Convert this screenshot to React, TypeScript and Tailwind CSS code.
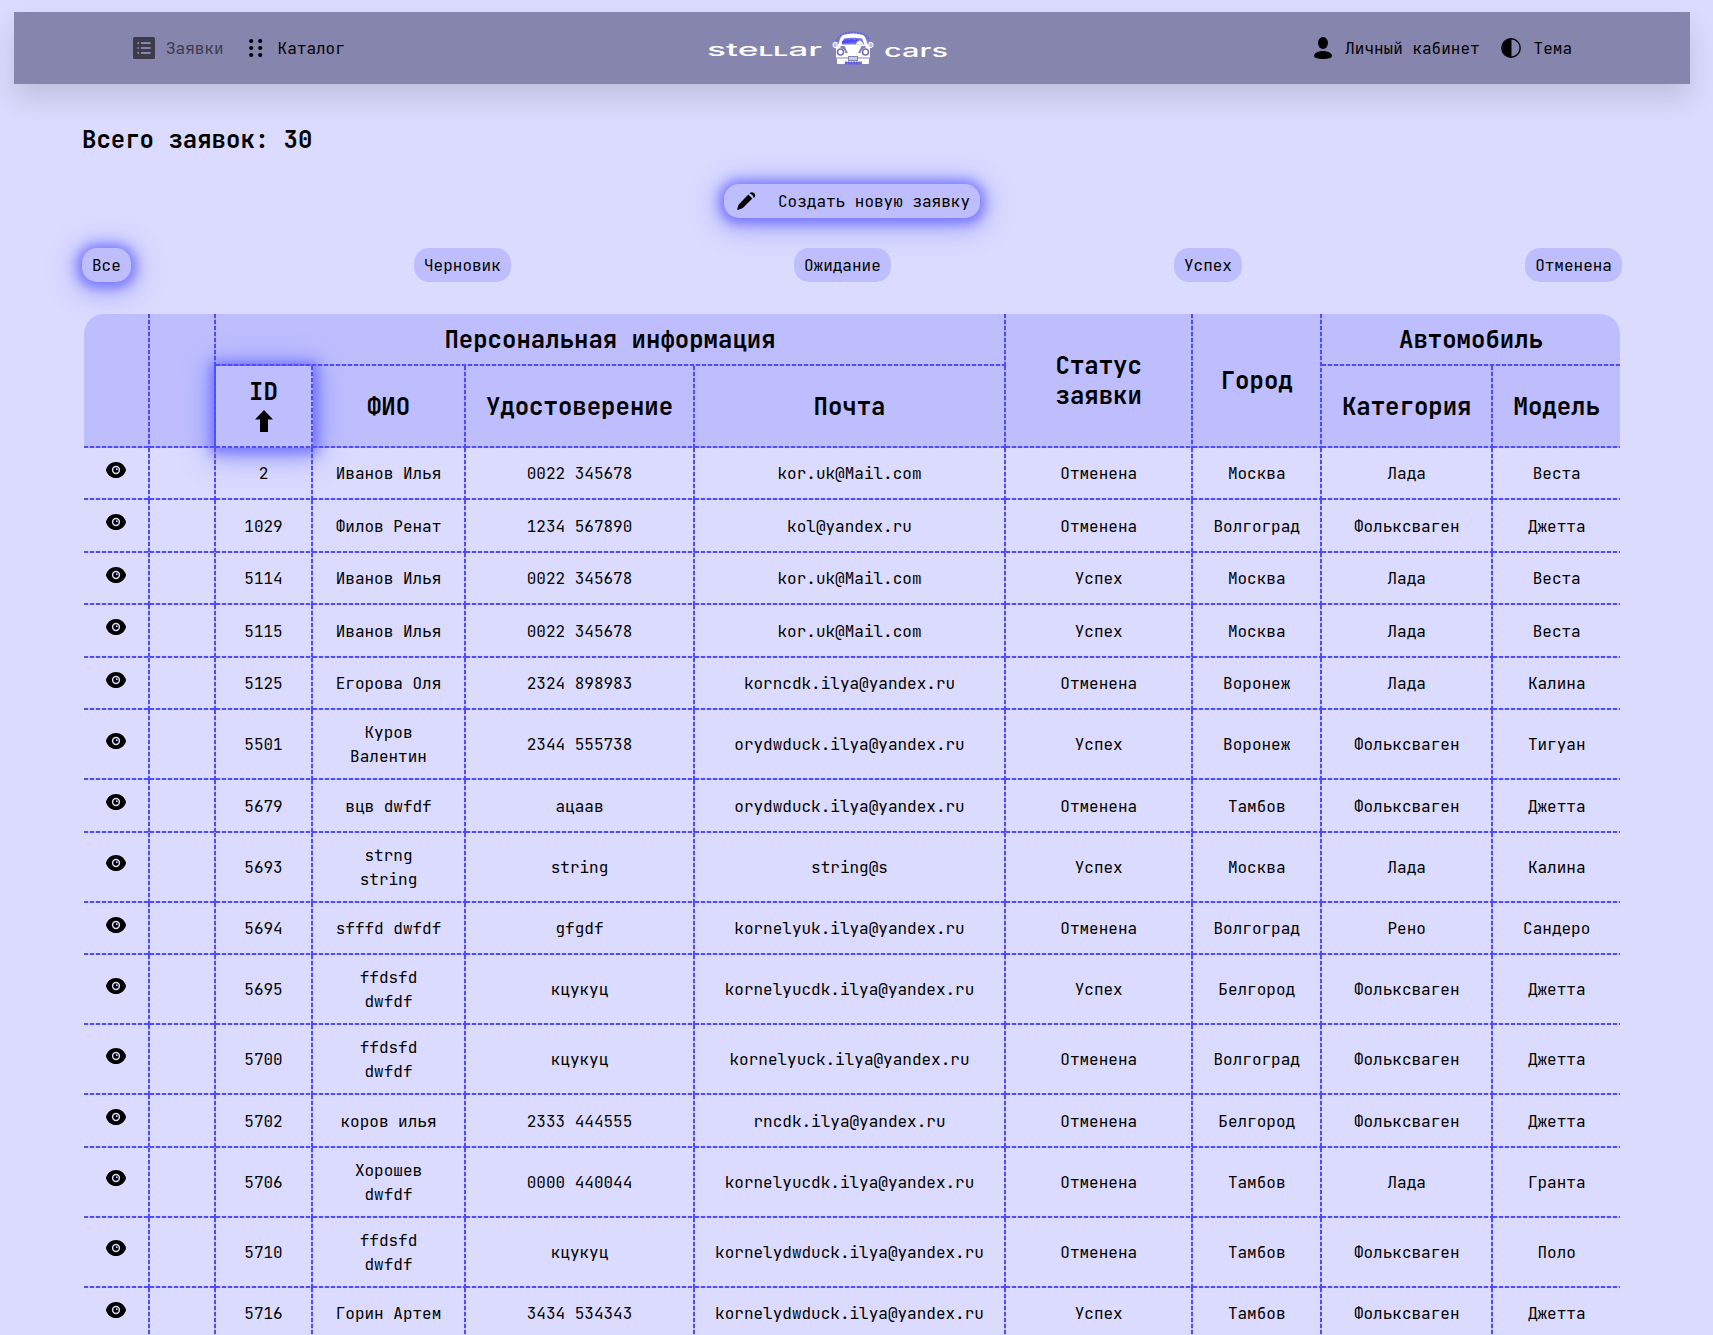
import React from "react";

type Row = [string, string, string, string, string, string, string, string];

const rows: Row[] = [
  ["2", "Иванов Илья", "0022 345678", "kor.uk@Mail.com", "Отменена", "Москва", "Лада", "Веста"],
  ["1029", "Филов Ренат", "1234 567890", "kol@yandex.ru", "Отменена", "Волгоград", "Фольксваген", "Джетта"],
  ["5114", "Иванов Илья", "0022 345678", "kor.uk@Mail.com", "Успех", "Москва", "Лада", "Веста"],
  ["5115", "Иванов Илья", "0022 345678", "kor.uk@Mail.com", "Успех", "Москва", "Лада", "Веста"],
  ["5125", "Егорова Оля", "2324 898983", "korncdk.ilya@yandex.ru", "Отменена", "Воронеж", "Лада", "Калина"],
  ["5501", "Куров\nВалентин", "2344 555738", "orydwduck.ilya@yandex.ru", "Успех", "Воронеж", "Фольксваген", "Тигуан"],
  ["5679", "вцв dwfdf", "ацаав", "orydwduck.ilya@yandex.ru", "Отменена", "Тамбов", "Фольксваген", "Джетта"],
  ["5693", "strng\nstring", "string", "string@s", "Успех", "Москва", "Лада", "Калина"],
  ["5694", "sfffd dwfdf", "gfgdf", "kornelyuk.ilya@yandex.ru", "Отменена", "Волгоград", "Рено", "Сандеро"],
  ["5695", "ffdsfd\ndwfdf", "кцукуц", "kornelyucdk.ilya@yandex.ru", "Успех", "Белгород", "Фольксваген", "Джетта"],
  ["5700", "ffdsfd\ndwfdf", "кцукуц", "kornelyuck.ilya@yandex.ru", "Отменена", "Волгоград", "Фольксваген", "Джетта"],
  ["5702", "коров илья", "2333 444555", "rncdk.ilya@yandex.ru", "Отменена", "Белгород", "Фольксваген", "Джетта"],
  ["5706", "Хорошев\ndwfdf", "0000 440044", "kornelyucdk.ilya@yandex.ru", "Отменена", "Тамбов", "Лада", "Гранта"],
  ["5710", "ffdsfd\ndwfdf", "кцукуц", "kornelydwduck.ilya@yandex.ru", "Отменена", "Тамбов", "Фольксваген", "Поло"],
  ["5716", "Горин Артем", "3434 534343", "kornelydwduck.ilya@yandex.ru", "Успех", "Тамбов", "Фольксваген", "Джетта"],
];

const filters = ["Все", "Черновик", "Ожидание", "Успех", "Отменена"];

const GLOW = "shadow-[0_1px_11px_5px_rgba(85,85,255,0.6),0_4px_28px_7px_rgba(100,100,255,0.42)]";

function ListIcon() {
  return (
    <svg className="h-[22px] w-[22px]" viewBox="0 0 22 22">
      <rect width="22" height="22" rx="1.500" fill="#3d3c4b" />
      <path d="M4.500 5H6v2H4.500zM4.500 10H6v2H4.500zM4.500 15H6v2H4.500zM8 5h9.500v2H8zM8 10h9.500v2H8zM8 15h9.500v2H8z" fill="#8685ad" />
    </svg>
  );
}

function DotsIcon() {
  return (
    <svg className="h-[20px] w-[14px]" viewBox="0 0 14 20">
      {[3, 10, 17].map((y) => (
        <g key={y}>
          <circle cx="2.200" cy={y} r="2.100" />
          <circle cx="11.200" cy={y} r="2.100" />
        </g>
      ))}
    </svg>
  );
}

function UserIcon() {
  return (
    <svg className="h-[22px] w-[18px]" viewBox="0 0 18 22">
      <ellipse cx="9" cy="6" rx="5" ry="6" />
      <path d="M9 14c5 0 9 2.300 9 5 0 2-4 3-9 3s-9-1-9-3c0-2.700 4-5 9-5z" />
    </svg>
  );
}

function ThemeIcon() {
  return (
    <svg className="h-[20px] w-[20px]" viewBox="0 0 20 20">
      <circle cx="10" cy="10" r="9.200" fill="none" stroke="#000" strokeWidth="1.400" />
      <path d="M10.500.8a9.200 9.200 0 1 0 0 18.400z" />
    </svg>
  );
}

function PencilIcon() {
  return (
    <svg className="h-5 w-5" viewBox="0 0 20 20">
      <path d="M12.300 3.600l4 4-9.200 9.100c-.5.5-1.200.8-1.900 1L1 19l1.200-4.200c.2-.700.5-1.300 1-1.900z" />
      <path d="M13.500 2.400c1-1.300 2.800-1.700 4.500-.4s1.500 3.200.3 4.400l-.7.600c0-2.200-1.700-4-4.100-4.600z" />
    </svg>
  );
}

function EyeIcon() {
  return (
    <svg className="h-4 w-5" viewBox="0 0 20 16">
      <path d="M10 0c5 0 8.300 3.200 9.700 6.800a3 3 0 0 1 0 2.400C18.300 12.800 15 16 10 16S1.700 12.800.3 9.200a3 3 0 0 1 0-2.400C1.700 3.200 5 0 10 0z" />
      <circle cx="10" cy="8" r="3.400" fill="none" stroke="#dbdbff" strokeWidth="1.500" />
      <circle cx="10.800" cy="7.200" r="0.900" fill="#dbdbff" />
    </svg>
  );
}

function CarLogo() {
  return (
    <svg className="h-[34px] w-[42px]" viewBox="0 0 42 34">
      <path d="M5 10C6-1.500 36-1.500 37 10" fill="none" stroke="#5b58f5" strokeWidth="2" strokeDasharray="1.500 1.500" />
      <path d="M11 4Q21 1 31 4q3 2 4 8l3 4.500v10l-1 2v3.500q0 1-1 1h-6q-1 0-1-1v-1H13v1q0 1-1 1H6q-1 0-1-1V28.500l-1-2v-10L7 12q1-6 4-8z" fill="#fff" />
      <path d="M12 7.500Q21 6 30 7.500l2.500 6h-23z" fill="#7774df" />
      <path d="M10 10l5-2 2 1 3-1 2 1.500 4-1.500 1 1-4 2.500-4-.5-3 1-6 .5z" fill="#4f4bff" />
      <path d="M24 13.500c.5-3 3-4.500 5-3.500l3 3.500z" fill="#fff" />
      <path d="M1 13.500q0-2 2-2h2v5H3q-2 0-2-2zM41 13.500q0-2-2-2h-2v5h2q2 0 2-2z" fill="#b9b8ff" stroke="#fff" />
      <path d="M8.500 15h4l3.500 7h-2.500q-1-4.500-5-5zM33.500 15h-4l-3.500 7h2.500q1-4.500 5-5z" fill="#8685ad" />
      <circle cx="8.500" cy="21" r="3" fill="#fff" stroke="#7170b4" strokeWidth="1.600" />
      <circle cx="33.500" cy="21" r="3" fill="#fff" stroke="#7170b4" strokeWidth="1.600" />
      <path d="M3.500 27h13M25.500 27h13" stroke="#8685ad" strokeWidth="1.200" />
      <rect x="16.500" y="25.500" width="9" height="4" fill="#c8c7e8" stroke="#8685ad" />
      <path d="M13 32h17" stroke="#5b58f5" strokeWidth="3" strokeDasharray="2 .7" />
    </svg>
  );
}

function Wordmark({ width, y, children }: { width: number; y: number; children: React.ReactNode }) {
  return (
    <svg width={width} height="24" className="overflow-visible">
      <text
        x="0"
        y={y}
        textLength={width}
        lengthAdjust="spacingAndGlyphs"
        fill="#fff"
        className="text-[17px] font-medium [font-family:Inter,sans-serif]"
      >
        {children}
      </text>
    </svg>
  );
}

const ROW_LINE =
  "bg-[image:repeating-linear-gradient(90deg,#4f4bff_0_4px,#4f4bff33_4px_6px)] bg-[size:100%_2px] bg-[position:left_bottom] bg-no-repeat";
const GRID_LINES =
  "bg-[image:repeating-linear-gradient(90deg,#4f4bff_0_4px,#4f4bff33_4px_6px),repeating-linear-gradient(180deg,#4f4bff_0_4px,#4f4bff33_4px_6px)] bg-[size:100%_2px,2px_100%] bg-[position:left_bottom,right_top] bg-no-repeat";
const HEAD = "bg-[#bebeff] p-0 text-2xl leading-[30px] font-bold";

export default function App() {
  return (
    <div className="h-[1335px] w-[1713px] overflow-hidden bg-[#dbdbff] pt-3 text-base text-black [font-family:'JetBrains_Mono','DejaVu_Sans_Mono',monospace]">
      <header className="ml-[14px] flex h-[72px] w-[1676px] items-center bg-[#8685ad] shadow-[0_14px_28px_rgba(0,0,0,0.13)]">
        <nav className="flex w-[693px] items-center pl-[119px]">
          <ListIcon />
          <span className="ml-[11px] pt-px text-[#3d3c4b]">Заявки</span>
          <span className="ml-[25px] flex"><DotsIcon /></span>
          <span className="ml-[15px] pt-px">Каталог</span>
        </nav>
        <div className="flex w-[241px] items-center">
          <Wordmark width={115} y={20}>
            ste<tspan className="text-[12.700px] font-semibold uppercase">ll</tspan>ar
          </Wordmark>
          <span className="ml-[10px]"><CarLogo /></span>
          <span className="ml-[10px]"><Wordmark width={64} y={20.7}>cars</Wordmark></span>
        </div>
        <div className="flex flex-1 items-center justify-end pr-[118px]">
          <UserIcon />
          <span className="ml-[13px] pt-px">Личный кабинет</span>
          <span className="ml-[21px] flex"><ThemeIcon /></span>
          <span className="ml-[13px] pt-px">Тема</span>
        </div>
      </header>

      <main className="ml-[82px] w-[1540px]">
        <h1 className="mt-[40px] text-2xl leading-[32px] font-bold">Всего заявок: 30</h1>

        <div className="mt-[28px] flex justify-center">
          <button className={`flex h-[34px] w-[256px] items-center rounded-[15px] bg-[#bebeff] pl-3 ${GLOW}`}>
            <PencilIcon />
            <span className="ml-[22px] pt-px whitespace-nowrap">Создать новую заявку</span>
          </button>
        </div>

        <div className="mt-[30px] flex justify-between">
          {filters.map((f, i) => (
            <button key={f} className={`h-[34px] rounded-[15px] bg-[#bebeff] px-[10px] pt-px leading-6 ${i === 0 ? GLOW : ""}`}>
              {f}
            </button>
          ))}
        </div>

        <table className="mt-[31.800px] ml-[2px] w-[1536px] table-fixed border-separate border-spacing-0 text-center">
          <colgroup>
            <col className="w-[66px]" />
            <col className="w-[66px]" />
            <col className="w-[97px]" />
            <col className="w-[153px]" />
            <col className="w-[229px]" />
            <col className="w-[311px]" />
            <col className="w-[187.400px]" />
            <col className="w-[128.600px]" />
            <col className="w-[171.400px]" />
            <col className="w-[126.600px]" />
          </colgroup>
          <thead>
            <tr className="h-[52px]">
              <th rowSpan={2} className={`${HEAD} ${GRID_LINES} rounded-tl-[20px]`} />
              <th rowSpan={2} className={`${HEAD} ${GRID_LINES}`} />
              <th colSpan={4} className={`${HEAD} ${GRID_LINES} pr-[2px]`}>Персональная информация</th>
              <th rowSpan={2} className={`${HEAD} ${GRID_LINES} pr-[2px]`}>Статус<br />заявки</th>
              <th rowSpan={2} className={`${HEAD} ${GRID_LINES} pr-[2px]`}>Город</th>
              <th colSpan={2} className={`${HEAD} ${ROW_LINE} rounded-tr-[20px]`}>Автомобиль</th>
            </tr>
            <tr className="h-[82px]">
              <th className={`${HEAD} ${GRID_LINES} relative pr-[2px] ${GLOW}`}>
                <span className={`absolute -top-[2px] right-0 left-0 h-[2px] ${ROW_LINE}`} />
                <span className="absolute -top-[2px] bottom-0 -left-[2px] w-[2px] bg-[repeating-linear-gradient(180deg,#4f4bff_0_4px,#4f4bff33_4px_6px)]" />
                <div className="flex flex-col items-center">
                  <span className="leading-[30px]">ID</span>
                  <svg className="mt-[3px] mb-[5px] h-[22px] w-[18px]" viewBox="0 0 18 22">
                    <path d="M9 0l9 9.500h-5V22H5V9.500H0z" />
                  </svg>
                </div>
              </th>
              <th className={`${HEAD} ${GRID_LINES} pr-[2px]`}>ФИО</th>
              <th className={`${HEAD} ${GRID_LINES} pr-[2px]`}>Удостоверение</th>
              <th className={`${HEAD} ${GRID_LINES} pr-[2px]`}>Почта</th>
              <th className={`${HEAD} ${GRID_LINES} pr-[2px]`}>Категория</th>
              <th className={`${HEAD} ${ROW_LINE}`}>Модель</th>
            </tr>
          </thead>
          <tbody>
            {rows.map((row) => (
              <tr key={row[0]} className={row[1].includes("\n") ? "h-[70px]" : "h-[52.500px]"}>
                <td className={`${GRID_LINES} p-0 pr-[2px]`}>
                  <div className="flex justify-center pb-[9px]"><EyeIcon /></div>
                </td>
                <td className={`${GRID_LINES} p-0`} />
                {row.map((cell, i) => (
                  <td
                    key={i}
                    className={`relative p-0 leading-6 whitespace-pre-line ${i < 7 ? `${GRID_LINES} pr-[2px]` : ROW_LINE}`}
                  >
                    {cell}
                  </td>
                ))}
              </tr>
            ))}
          </tbody>
        </table>
      </main>
    </div>
  );
}
